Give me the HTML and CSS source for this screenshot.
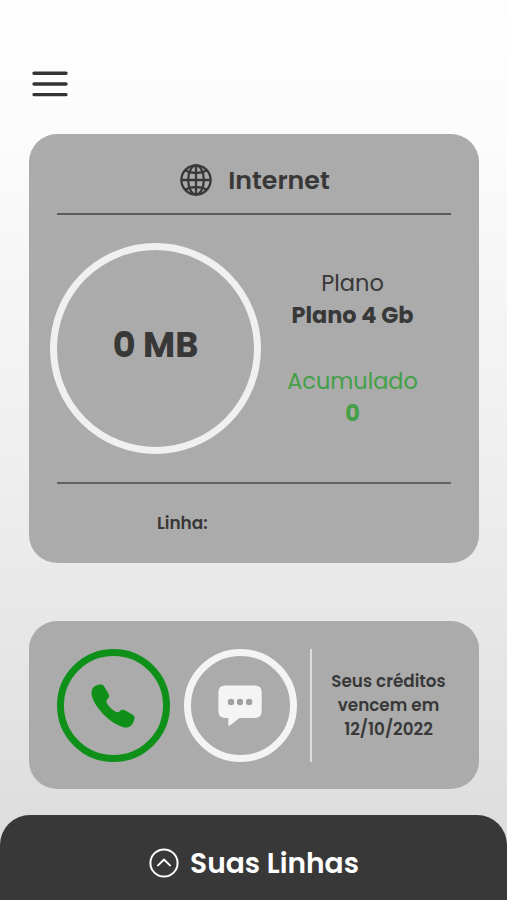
FILE: index.html
```html
<!DOCTYPE html>
<html lang="pt-BR">
<head>
<meta charset="utf-8">
<title>Internet</title>
<link rel="stylesheet" href="styles.css">
</head>
<body>
<div class="app">
  <header class="topbar">
    <svg class="menu" viewBox="0 0 36 26" fill="none" stroke="#333" stroke-width="3.4" stroke-linecap="round"><path d="M2 2.2H34M2 13H34M2 23.6H34"/></svg>
  </header>
  <section class="card internet">
    <h1 class="card-title">
      <svg class="globe" viewBox="0 0 32 32" fill="none" stroke="#383838" stroke-width="2.3"><circle cx="16" cy="16" r="14.6"/><ellipse cx="16" cy="16" rx="7.8" ry="14.6"/><path d="M16 1.4V30.6M1.4 16H30.6M5 6.5Q16 11.5 27 6.5M5 25.5Q16 20.5 27 25.5"/></svg>
      <span class="t-internet">Internet</span>
    </h1>
    <div class="usage">
      <div class="ring"><span class="t-mb">0 MB</span></div>
      <div class="plan">
        <span class="t-plano">Plano</span>
        <span class="t-name">Plano 4 Gb</span>
        <span class="t-acc">Acumulado</span>
        <span class="t-zero">0</span>
      </div>
    </div>
    <div class="line-row"><span class="t-linha">Linha:</span></div>
  </section>
  <section class="card credits">
    <div class="dial phone">
      <svg viewBox="0 0 44 44" fill="#0f9119"><path d="M2.2 3.6C4.4 1.2 7.3.2 10.3.5C11.8.7 12.6 1.6 13.3 2.8L17.1 9C18.7 11.8 18.3 13 16.6 14.8C15.5 16 15.1 17.3 15.6 18.5C17.7 22.5 21.2 26 25.2 28.1C26.5 28.7 27.7 28.2 28.9 27.1C30.6 25.5 32 25.2 34.4 26.5L41.4 30.6C43.2 31.7 43.9 33.2 43.5 35C42.8 38 41.1 41 38.8 42.6C36.3 44.2 32.1 43.6 27.4 41.2C16.8 36.1 7.3 26.2 2.5 16.4C0 11.3-.1 6.5 2.2 3.6Z"/></svg>
    </div>
    <div class="dial chat">
      <svg viewBox="0 0 44 42"><path fill="#f4f4f4" d="M7 .5H37Q43.7 .5 43.7 7V26Q43.7 33 37 33H21.5L12 40.5Q10.3 41.5 10.3 39.5V33H7Q.4 33 .4 26V7Q.4 .5 7 .5Z"/><g fill="#a0a0a0"><circle cx="13" cy="17" r="3.2"/><circle cx="22" cy="17" r="3.2"/><circle cx="31.1" cy="17" r="3.2"/></g></svg>
    </div>
    <div class="expiry">
      <span class="t-expiry">Seus créditos</span>
      <span class="t-expiry">vencem em</span>
      <span class="t-expiry">12/10/2022</span>
    </div>
  </section>
  <footer class="sheet">
    <svg class="up" viewBox="0 0 30 30" fill="none" stroke="#fff" stroke-width="2"><circle cx="15" cy="15" r="13.6"/><path d="M9 17.4L15 11.6L21 17.4" stroke-width="2" stroke-linecap="round"/></svg>
    <span class="t-suas">Suas Linhas</span>
  </footer>
</div>
</body>
</html>
```
FILE: styles.css
```css
* { box-sizing: border-box; }
body { margin: 0; font-family: Poppins, Inter, sans-serif; color: #383838; }
.app { height: 900px; overflow: hidden; display: flex; flex-direction: column; background: linear-gradient(#fdfdfd 0, #fefefe 30px, #fcfcfc 130px, #ededed 500px, #dedede 820px); }
.topbar { height: 134px; padding: 71px 0 0 32px; }
.menu { display: block; width: 36px; height: 26px; }
.card { flex: none; margin: 0 28px 0 29px; border-radius: 28px; background: #ababab; }
.internet { height: 429px; padding: 0 28px; }
.card-title { margin: 0; height: 81px; padding: 13px 0 0 2px; display: flex; align-items: center; justify-content: center; gap: 16px; border-bottom: 2px solid #5b5b5b; }
.globe { width: 32px; height: 32px; }
.usage { height: 269px; display: flex; align-items: center; border-bottom: 2px solid #626262; }
.ring { flex: none; width: 211px; height: 211px; margin-left: -7px; border: 7px solid #f0f0f0; border-radius: 50%; display: flex; align-items: center; justify-content: center; padding-bottom: 8px; }
.plan { flex: none; width: 183px; padding-bottom: 1px; display: flex; flex-direction: column; align-items: center; line-height: 32px; }
.line-row { padding: 27px 0 0 100px; line-height: 24px; }
.credits { height: 168px; margin-top: 58px; padding: 28px; display: flex; }
.dial { flex: none; width: 113px; height: 113px; border: 7.5px solid; border-radius: 50%; display: flex; align-items: center; justify-content: center; }
.phone { border-color: #0f9119; }
.phone svg { width: 44px; height: 44px; margin-right: 1px; }
.chat { border-color: #f4f4f4; margin-left: 13.5px; }
.chat svg { width: 44px; height: 42px; }
.expiry { flex: none; width: 157px; height: 113px; margin-left: 13.5px; padding: 0 2px 2px 0; border-left: 2px solid #dcdcdc; display: flex; flex-direction: column; align-items: center; justify-content: center; line-height: 24px; }
.sheet { flex: none; height: 85px; margin-top: 26px; padding: 11px 0 0 1px; border-radius: 30px 30px 0 0; background: #383838; color: #fff; display: flex; align-items: center; justify-content: center; gap: 11px; }
.up { width: 30px; height: 30px; }
span { white-space: nowrap; }
.t-internet { font-size: 25.3px; font-weight: 600; }
.t-mb { font-size: 35px; font-weight: 700; }
.t-plano { font-size: 22.5px; }
.t-name { font-size: 22.4px; font-weight: 700; }
.t-acc { font-size: 22.4px; color: #43a047; margin-top: 34px; }
.t-zero { font-size: 22.4px; font-weight: 700; color: #43a047; }
.t-linha { font-size: 16.9px; font-weight: 600; }
.t-expiry { font-size: 16.8px; font-weight: 600; }
.t-suas { font-size: 28.1px; font-weight: 600; }
```
